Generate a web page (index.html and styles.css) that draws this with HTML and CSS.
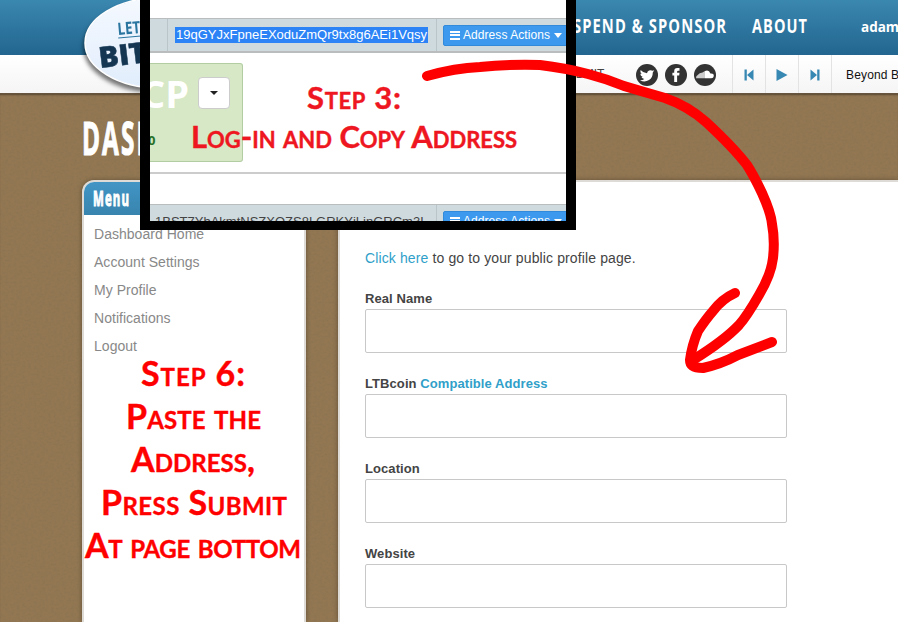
FILE: index.html
```
<!DOCTYPE html>
<html lang="en">
<head>
<meta charset="utf-8">
<title>Dashboard</title>
<link rel="stylesheet" href="styles.css">
</head>
<body>
<svg class="texture" width="898" height="622" aria-hidden="true">
  <filter id="grain"><feTurbulence type="fractalNoise" baseFrequency="0.35 0.5" numOctaves="3" seed="4"/><feColorMatrix values="0 0 0 0 0.22  0 0 0 0 0.16  0 0 0 0 0.08  0.8 0 0 0 -0.3"/></filter>
  <rect width="898" height="622" filter="url(#grain)"/>
</svg>
<header class="top">
  <nav class="nav">
    <svg width="300" height="55"><text x="13" y="33" textLength="154" lengthAdjust="spacingAndGlyphs">SPEND &amp; SPONSOR</text><text x="192" y="33" textLength="56" lengthAdjust="spacingAndGlyphs">ABOUT</text></svg>
  </nav>
  <span class="user">adam</span>
</header>
<div class="bar">
  <span class="submit">SUBMIT</span>
  <div class="social">
    <svg viewBox="0 0 22 22"><circle cx="11" cy="11" r="11"/><path d="M18.2 6.3l-1.700.5A3.600 3.600 0 0 0 11 9.200Q7.500 9.100 4.600 5.900q-1 2.500 1 4.200l-1.300-.3q0 2.200 2.500 3.100l-1.300.1q.7 1.700 2.800 2-1.800 1.400-4.400 1.200Q8.500 18.900 13 16.100q3.800-2.500 3.800-7.600z" fill="#fff"/></svg>
    <svg viewBox="0 0 22 22"><circle cx="11" cy="11" r="11"/><path d="M9.200 18v-6.500H7.400V8.700h1.800V7.300Q9.200 4 12.300 4h2.200v2.700h-1.400q-1 0-1 1v1h2.400l-.3 2.800h-2.100V18z" fill="#fff"/></svg>
    <svg viewBox="0 0 22 22"><circle cx="11" cy="11" r="11"/><path d="M11 14.300V7q4-1.600 5.400 2.600 3.400-.4 3.400 2.300-.2 2.400-2.600 2.400z" fill="#fff"/><path d="M2 14.300q-.3-2.500 2-3.500Q6 8.500 8 8.800L11 7v7.300z" fill="#ccc"/></svg>
  </div>
  <div class="player">
    <span><svg viewBox="0 0 10 12"><path d="M.5.5h2.300v11H.5zM9.500.5v11L3 6z"/></svg></span>
    <span><svg class="play" viewBox="0 0 12 12"><path d="M.5 0v12L11.500 6z"/></svg></span>
    <span><svg viewBox="0 0 10 12"><path d="M7.200.5h2.300v11H7.200zM.5.5v11L7 6z"/></svg></span>
    <b>Beyond Bitcoin</b>
  </div>
</div>
<main>
  <h1><svg width="200" height="50"><text x="0" y="41" textLength="172" lengthAdjust="spacingAndGlyphs">DASHBOARD</text></svg></h1>
  <div class="columns">
    <aside class="side">
      <h2><svg width="60" height="33"><text x="0" y="23.500" textLength="37" lengthAdjust="spacingAndGlyphs">Menu</text></svg></h2>
      <a>Dashboard Home</a><a>Account Settings</a><a>My Profile</a><a>Notifications</a><a>Logout</a>
    </aside>
    <section class="content">
      <p><a>Click here</a> to go to your public profile page.</p>
      <label>Real Name</label><div class="field"></div>
      <label>LTBcoin <a>Compatible Address</a></label><div class="field"></div>
      <label>Location</label><div class="field"></div>
      <label>Website</label><div class="field"></div>
    </section>
  </div>
</main>
<svg class="logo" width="160" height="105" viewBox="0 0 160 105">
  <defs><linearGradient id="lg" x1="0" y1="0" x2="0" y2="1"><stop offset="0" stop-color="#f5f9ff"/><stop offset="1" stop-color="#e1edfc"/></linearGradient></defs>
  <ellipse cx="79" cy="43" rx="74" ry="45" fill="url(#lg)" stroke="#fff" stroke-width="1.500"/>
  <g transform="rotate(-5 38 35)"><text class="lets" x="38" y="35" textLength="34" lengthAdjust="spacingAndGlyphs">LET'S</text><path d="M38 38h60" stroke="#2a75a0"/></g>
  <text class="bit" x="20" y="68" transform="rotate(-7 20 68)" textLength="48" lengthAdjust="spacingAndGlyphs">BIT</text>
</svg>
<div class="inset">
  <div class="gap"></div>
  <div class="row"><span class="address"><mark>19qGYJxFpneEXoduZmQr9tx8g6AEi1Vqsy</mark></span><span class="action"><i></i>Address Actions<em></em></span></div>
  <div class="panel"><div class="token"><div class="tokenhead"><strong>CP</strong><span class="drop"><em></em></span></div><small>0</small></div></div>
  <div class="space"></div>
  <div class="row"><span class="address plain">1BST7YbAkmtNSZXQZS8LGRKYjLjnGRCm3L</span><span class="action"><i></i>Address Actions<em></em></span></div>
</div>
<svg class="notes" width="898" height="622" viewBox="0 0 898 622">
  <g class="step3"><text x="307" y="109" textLength="94">Step 3:</text><text x="191" y="148" textLength="326">Log-in and Copy Address</text></g>
  <g class="step6"><text x="141" y="385.500" textLength="104">Step 6:</text><text x="126" y="428.500" textLength="135">Paste the</text><text x="131" y="471.500" textLength="124">Address,</text><text x="101" y="514.500" textLength="186">Press Submit</text><text x="85" y="557.500" textLength="216">At page bottom</text></g>
  <path class="arrow" d="M427 76Q455 68 480 67Q510 64 540 65Q565 68 588 74Q607 79 624 86Q644 92 665 98Q688 106 706 122Q733 147 747 165Q754 176 762 193Q771 213 772 224Q775 240 773 258Q771 275 759 295Q747 316 739 325Q725 340 693 360"/>
  <path class="arrow" d="M735 293Q722 299 713 311Q706 319 698 331Q692 345 690 360Q690 368 703 368Q721 364 738 355L772 342"/>
</svg>
</body>
</html>
```
FILE: styles.css
```
* { box-sizing: border-box; }
body { margin: 0; width: 898px; height: 622px; overflow: hidden; position: relative; background: #937752; font: 14px "Liberation Sans", sans-serif; color: #444; }
.texture { position: absolute; left: 0; top: 0; z-index: -1; }
svg { display: block; overflow: visible; }
.top { height: 55px; padding-left: 560px; display: flex; overflow: hidden; background: linear-gradient(#3a87b0, #22668f); }
.nav { width: 301px; flex: none; }
.nav text { font: bold 19px "Open Sans", sans-serif; letter-spacing: 1.4px; fill: #fff; }
.user { font: bold 13.5px/54px "Open Sans", sans-serif; color: #fff; }
.bar { height: 39px; padding-left: 559px; display: flex; align-items: stretch; overflow: hidden; background: linear-gradient(#fff, #f5f5f5); border-bottom: 1px solid #66543e; }
.submit { flex: none; width: 77px; font-size: 12px; line-height: 38px; color: #444; }
.social { flex: none; width: 96px; display: flex; align-items: center; gap: 7px; padding-top: 2px; }
.social svg { width: 22px; height: 22px; fill: #333; }
.player { flex: none; display: flex; }
.player span { width: 33px; display: flex; align-items: center; justify-content: center; border-left: 1px solid #e3e3e3; padding-top: 2px; }
.player svg { width: 10px; height: 12px; fill: #3788b3; }
.player .play { width: 12px; }
.player b { font: 12px/40px "Liberation Sans", sans-serif; letter-spacing: .15px; color: #111; border-left: 1px solid #e3e3e3; padding-left: 14px; white-space: nowrap; }
main { padding-left: 82px; box-shadow: inset 0 2px 2px -1px #0006; }
h1 { margin: 0; height: 86px; padding-top: 20px; }
h1 text { font: bold 47px "Open Sans", sans-serif; letter-spacing: 4px; fill: #fff; stroke: #fff; stroke-width: 1.2px; }
.columns { display: flex; gap: 32px; }
.side, .content { flex: none; height: 442px; background: #fff; border: 2px solid #dedbd7; border-bottom: 0; box-shadow: 0 0 5px #0005; }
.side { width: 224px; border-radius: 12px 0 0 0; overflow: hidden; }
.side h2 { margin: 0 0 5px; height: 33px; padding-left: 9px; background: linear-gradient(#4195c5, #3884ae); }
.side text { font: bold 21px "Open Sans", sans-serif; letter-spacing: 2px; fill: #fff; stroke: #fff; stroke-width: 1px; }
.side > a { display: block; height: 28px; line-height: 28px; padding-left: 10px; color: #888; letter-spacing: .03px; }
.content { width: 560px; border-right: 0; padding: 68px 0 0 25px; }
.content p { margin: 0 0 25px; line-height: 16px; letter-spacing: .12px; }
.content a { color: #309fc9; }
.content label { display: block; height: 18px; line-height: 16px; font-weight: bold; font-size: 13px; letter-spacing: .08px; }
.field { width: 422px; height: 44px; margin-bottom: 23px; border: 1px solid #c8c8c8; border-radius: 2px; background: #fff; }
.logo { position: absolute; left: 80px; top: 0; filter: drop-shadow(-1px 4px 2px #0008); }
.lets { font: bold 17px "Open Sans", sans-serif; fill: #2a75a0; }
.bit { font: 800 29px "Open Sans", sans-serif; fill: #143652; stroke: #143652; stroke-width: .5px; }
.inset { position: absolute; left: 140px; top: 0; width: 436px; height: 230px; border: 10px solid #000; border-top: 0; border-bottom-width: 9px; background: #fff; overflow: hidden; }
.gap { height: 18px; }
.row { height: 35px; display: flex; align-items: center; background: #cfdadf; border: solid #b9bdbd; border-width: 1px 0 2px; }
.address { width: 270px; height: 32px; display: flex; align-items: center; flex: none; margin-left: 17px; padding-left: 7px; border: solid #bac5ca; border-width: 0 1px; }
.address mark { width: 253px; padding: 0 1px; font-size: 13px; letter-spacing: .01px; line-height: 16px; background: #2b83f6; color: #fff; white-space: nowrap; overflow: hidden; }
.address.plain { margin-left: 0; padding-left: 5px; width: 287px; border-left: 0; font-size: 13px; }
.action { flex: none; width: 126px; height: 21px; margin-left: 6px; padding-left: 6px; display: flex; align-items: center; background: #3c99ed; color: #fff; font-size: 12px; letter-spacing: .06px; border: 1px solid #328adb; border-radius: 2px; }
.action i { width: 10px; height: 9px; margin-right: 3px; border: solid #fff; border-width: 2px 0; background: linear-gradient(transparent 1.5px, #fff 1.5px, #fff 3.5px, transparent 3.5px); }
.action em { margin-left: 4px; border: 4px solid transparent; border-top: 5px solid #fff; border-bottom: 0; }
.panel { height: 121px; padding-top: 10px; border-bottom: 2px solid #ccc; }
.token { width: 93px; height: 99px; background: #d6e8c6; border: 1px solid #b3cda2; border-left: 0; border-radius: 0 3px 3px 0; }
.tokenhead { height: 58px; display: flex; align-items: center; justify-content: flex-end; gap: 9px; padding-right: 12px; overflow: hidden; }
.token strong { flex: none; font: bold 38px/58px "Open Sans", sans-serif; color: #fff; }
.drop { flex: none; width: 32px; height: 32px; display: flex; align-items: center; justify-content: center; background: #fff; border: 1px solid #ccc; border-radius: 4px; }
.drop em { border: 4px solid transparent; border-top-color: #222; border-bottom: 0; }
.token small { display: block; margin: 9px 0 0 -2px; font: bold 13px "Open Sans", sans-serif; color: #277027; }
.space { height: 30px; }
.notes { position: absolute; left: 0; top: 0; }
.notes text { font-family: Lato, sans-serif; font-weight: bold; font-variant: small-caps; stroke-width: .4px; }
.step3 text { font-size: 31px; fill: #ee1620; stroke: #ee1620; }
.step6 text { font-size: 34px; fill: #f00; stroke: #f00; }
.arrow { fill: none; stroke: #f00; stroke-width: 10; stroke-linecap: round; stroke-linejoin: round; }
```
